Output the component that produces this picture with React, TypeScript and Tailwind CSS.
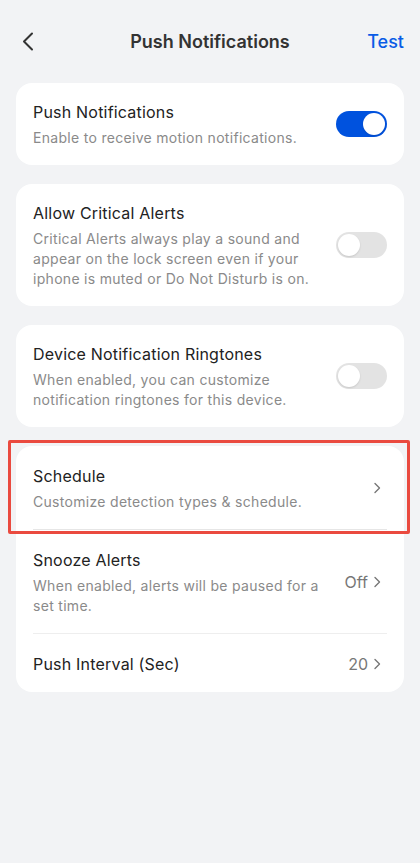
import React from "react";

const font = { fontFamily: 'Inter, "Noto Sans", sans-serif' };

function Toggle({ on }: { on: boolean }) {
  return (
    <div
      className={`flex h-[26px] w-[51px] shrink-0 items-center rounded-full px-[2px] ${
        on ? "justify-end bg-[#0052de]" : "justify-start bg-[#e3e3e3]"
      }`}
    >
      <div className="h-[22px] w-[22px] rounded-full bg-white shadow-[0_1px_2px_rgba(0,0,0,0.12)]" />
    </div>
  );
}

function Chevron() {
  return (
    <svg width="7" height="12" viewBox="0 0 7 12" fill="none" className="shrink-0">
      <path d="M1 1.5L5.5 6L1 10.5" stroke="#777" strokeWidth="1.4" strokeLinecap="round" strokeLinejoin="round" />
    </svg>
  );
}

function Title({ children }: { children: React.ReactNode }) {
  return <div className="text-[16px] leading-[24px] tracking-[0.2px] text-[#222]">{children}</div>;
}

function Sub({ children }: { children: React.ReactNode }) {
  return <div className="mt-[4px] text-[14px] leading-[20px] tracking-[0.3px] text-[#8a8a8a]">{children}</div>;
}

function ToggleCard({ title, sub, on }: { title: string; sub: string; on: boolean }) {
  return (
    <div className="flex items-center gap-3 rounded-[16px] bg-white px-[17px] pt-[17px] pb-[17px]">
      <div className="flex-1">
        <Title>{title}</Title>
        <Sub>{sub}</Sub>
      </div>
      <Toggle on={on} />
    </div>
  );
}

export default function App() {
  return (
    <div className="min-h-[863px] w-full bg-[#f2f3f5]" style={font}>
      <div className="flex h-[83px] items-center justify-between px-[16px]">
        <div className="flex w-[60px] items-center pl-[6px]">
          <svg width="12" height="20" viewBox="0 0 12 20" fill="none">
            <path d="M10 1.5L2 9.5L10 17.5" stroke="#333" strokeWidth="2" strokeLinecap="round" strokeLinejoin="round" />
          </svg>
        </div>
        <div className="text-[18px] font-semibold text-[#333]">Push Notifications</div>
        <div className="flex w-[60px] justify-end text-[18px] font-medium text-[#0a5ce6]">Test</div>
      </div>

      <div className="flex flex-col gap-[18px] px-[16px]">
        <ToggleCard title="Push Notifications" sub="Enable to receive motion notifications." on={true} />
        <div className="mt-[1px]">
          <ToggleCard
            title="Allow Critical Alerts"
            sub="Critical Alerts always play a sound and appear on the lock screen even if your iphone is muted or Do Not Disturb is on."
            on={false}
          />
        </div>
        <div className="mt-[1px]">
          <ToggleCard
            title="Device Notification Ringtones"
            sub="When enabled, you can customize notification ringtones for this device."
            on={false}
          />
        </div>

        <div className="relative mt-[1px] rounded-[16px] bg-white px-[17px]">
          <div className="pointer-events-none absolute top-[-6px] right-[-6px] left-[-8px] h-[94px] rounded-[2px] border-[3px] border-[#ea4a3f]" />
          <div className="flex items-center gap-3 border-b border-[#e6e6e6] pt-[18px] pb-[17px]">
            <div className="flex-1">
              <Title>Schedule</Title>
              <Sub>Customize detection types &amp; schedule.</Sub>
            </div>
            <div className="pr-[6px]">
              <Chevron />
            </div>
          </div>
          <div className="flex items-center gap-3 border-b border-[#eeeeee] pt-[18px] pb-[17px]">
            <div className="flex-1 pr-[8px]">
              <Title>Snooze Alerts</Title>
              <Sub>When enabled, alerts will be paused for a set time.</Sub>
            </div>
            <div className="flex items-center gap-[6px] pr-[6px]">
              <span className="text-[16px] text-[#777]">Off</span>
              <Chevron />
            </div>
          </div>
          <div className="flex items-center gap-3 pt-[18px] pb-[16px]">
            <div className="flex-1">
              <Title>Push Interval (Sec)</Title>
            </div>
            <div className="flex items-center gap-[6px] pr-[6px]">
              <span className="text-[16px] text-[#777]">20</span>
              <Chevron />
            </div>
          </div>
        </div>
      </div>
    </div>
  );
}
